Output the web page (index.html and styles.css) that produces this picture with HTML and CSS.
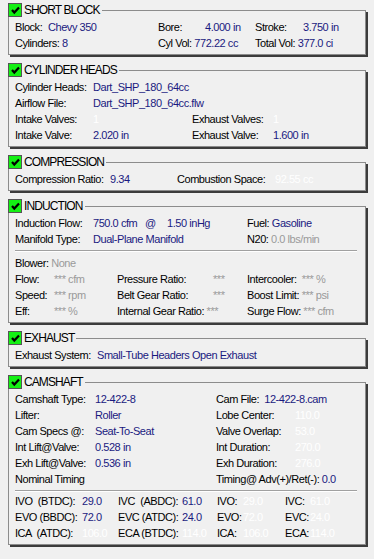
FILE: index.html
```html
<!DOCTYPE html>
<html>
<head>
  <meta charset="UTF-8">
  <title>Engine Summary</title>
  <link rel="stylesheet" href="styles.css">
</head>
<body>

<!-- SHORT BLOCK -->
<div class="panel">
  <div class="head"><span class="chk"><svg width="11" height="11" viewBox="0 0 11 11"><path d="M2 5 L4.3 7.6 L9 2.5" fill="none" stroke="#000" stroke-width="2.2"/></svg></span>SHORT BLOCK</div>
  <div class="grid g-sb">
    <span>Block:</span><span class="v">Chevy 350</span><span>Bore:</span><span class="v">4.000 in</span><span>Stroke:</span><span class="v">3.750 in</span>
    <span class="s2">Cylinders: <b class="v">8</b></span><span class="s2">Cyl Vol: <b class="v">772.22 cc</b></span><span class="s2">Total Vol: <b class="v">377.0 ci</b></span>
  </div>
</div>

<!-- CYLINDER HEADS -->
<div class="panel">
  <div class="head"><span class="chk"><svg width="11" height="11" viewBox="0 0 11 11"><path d="M2 5 L4.3 7.6 L9 2.5" fill="none" stroke="#000" stroke-width="2.2"/></svg></span>CYLINDER HEADS</div>
  <div class="grid g-ch">
    <span>Cylinder Heads:</span><span class="v s3">Dart_SHP_180_64cc</span>
    <span>Airflow File:</span><span class="v s3">Dart_SHP_180_64cc.flw</span>
    <span>Intake Valves:</span><span class="w">1</span><span>Exhaust Valves:</span><span class="w">1</span>
    <span>Intake Valve:</span><span class="v">2.020 in</span><span>Exhaust Valve:</span><span class="v">1.600 in</span>
  </div>
</div>

<!-- COMPRESSION -->
<div class="panel">
  <div class="head"><span class="chk"><svg width="11" height="11" viewBox="0 0 11 11"><path d="M2 5 L4.3 7.6 L9 2.5" fill="none" stroke="#000" stroke-width="2.2"/></svg></span>COMPRESSION</div>
  <div class="grid g-co">
    <span>Compression Ratio:</span><span class="v">9.34</span><span>Combustion Space:</span><span class="w">92.55 cc</span>
  </div>
</div>

<!-- INDUCTION -->
<div class="panel">
  <div class="head"><span class="chk"><svg width="11" height="11" viewBox="0 0 11 11"><path d="M2 5 L4.3 7.6 L9 2.5" fill="none" stroke="#000" stroke-width="2.2"/></svg></span>INDUCTION</div>
  <div class="grid g-in">
    <span>Induction Flow:</span><span class="v">750.0 cfm</span><span class="v">@</span><span class="v">1.50 inHg</span><span>Fuel: <b class="v">Gasoline</b></span>
    <span>Manifold Type:</span><span class="v s3">Dual-Plane Manifold</span><span>N20: <b class="g">0.0 lbs/min</b></span>
  </div>
  <div class="sep"></div>
  <div class="grid g-bl">
    <span class="s5">Blower: <b class="g">None</b></span>
    <span>Flow:</span><span class="g">*** cfm</span><span>Pressure Ratio:</span><span class="g">***</span><span>Intercooler: <b class="g">&nbsp;*** %</b></span>
    <span>Speed:</span><span class="g">*** rpm</span><span>Belt Gear Ratio:</span><span class="g">***</span><span>Boost Limit: <b class="g">*** psi</b></span>
    <span>Eff:</span><span class="g">*** %</span><span>Internal Gear Ratio: <b class="g">***</b></span><span></span><span>Surge Flow: <b class="g">*** cfm</b></span>
  </div>
</div>

<!-- EXHAUST -->
<div class="panel">
  <div class="head"><span class="chk"><svg width="11" height="11" viewBox="0 0 11 11"><path d="M2 5 L4.3 7.6 L9 2.5" fill="none" stroke="#000" stroke-width="2.2"/></svg></span>EXHAUST</div>
  <div class="grid g-ex">
    <span>Exhaust System:</span><span class="v">Small-Tube Headers Open Exhaust</span>
  </div>
</div>

<!-- CAMSHAFT -->
<div class="panel">
  <div class="head"><span class="chk"><svg width="11" height="11" viewBox="0 0 11 11"><path d="M2 5 L4.3 7.6 L9 2.5" fill="none" stroke="#000" stroke-width="2.2"/></svg></span>CAMSHAFT</div>
  <div class="grid g-cam">
    <span>Camshaft Type:</span><span class="v">12-422-8</span><span class="s2">Cam File: &nbsp;<b class="v">12-422-8.cam</b></span>
    <span>Lifter:</span><span class="v">Roller</span><span>Lobe Center:</span><span class="w">110.0</span>
    <span>Cam Specs @:</span><span class="v">Seat-To-Seat</span><span>Valve Overlap:</span><span class="w">53.0</span>
    <span>Int Lift@Valve:</span><span class="v">0.528 in</span><span>Int Duration:</span><span class="w">270.0</span>
    <span>Exh Lift@Valve:</span><span class="v">0.536 in</span><span>Exh Duration:</span><span class="w">276.0</span>
    <span class="s2">Nominal Timing</span><span class="s2">Timing@ Adv(+)/Ret(-): <b class="v">0.0</b></span>
  </div>
  <div class="sep sep-tight"></div>
  <div class="grid g-tm">
    <span>IVO &nbsp;(BTDC):</span><span class="v">29.0</span><span>IVC &nbsp;(ABDC):</span><span class="v">61.0</span><span>IVO:</span><span class="w">29.0</span><span>IVC:</span><span class="w">61.0</span>
    <span>EVO (BBDC):</span><span class="v">72.0</span><span>EVC (ATDC):</span><span class="v">24.0</span><span>EVO:</span><span class="w">72.0</span><span>EVC:</span><span class="w">24.0</span>
    <span>ICA &nbsp;(ATDC):</span><span class="w">106.0</span><span>ECA (BTDC):</span><span class="w">114.0</span><span>ICA:</span><span class="w">106.0</span><span>ECA:</span><span class="w">114.0</span>
  </div>
</div>

</body>
</html>
```

FILE: styles.css
```css
/* --- base --- */
* {
  margin: 0;
  padding: 0;
  box-sizing: border-box;
}
html, body {
  background: #f0f0f0;
}
body {
  padding-top: 10px;
  font-family: 'Liberation Sans', Arial, sans-serif;
  font-size: 11px;
  letter-spacing: -0.45px;
  color: #000;
}
b {
  font-weight: normal;
}

/* --- group panels --- */
.panel {
  margin: 0 8px 15px;
  padding: 0 6px 3px;
  border: 1px solid #8c8c8c;
  box-shadow: 2px 2px 0 #3c3c3c;
}
.head {
  display: flex;
  align-items: center;
  width: fit-content;
  height: 14px;
  margin: -8px 0 2px -7px;
  padding-right: 2px;
  background: #f0f0f0;
  font-size: 12px;
  letter-spacing: -0.9px;
  line-height: 14px;
}
.chk {
  display: flex;
  align-items: center;
  justify-content: center;
  width: 14px;
  height: 14px;
  margin-right: 2px;
  border: 1px solid #555;
  background: #14f014;
}

/* --- rows --- */
.grid {
  display: grid;
  grid-auto-rows: 16px;
  align-items: center;
  white-space: nowrap;
}
.s2 { grid-column: span 2; }
.s3 { grid-column: span 3; }
.s5 { grid-column: span 5; }

.v { color: #1a1a80; }
.g { color: #9a9a9a; }
.w { color: #fff; }

.sep {
  height: 2px;
  margin: 3px 2px 3px 0;
  border-top: 1px solid #a0a0a0;
  border-bottom: 1px solid #fff;
}
.sep-tight {
  margin-bottom: 1px;
}

.g-sb  { grid-template-columns: 33px 110px 47px 50px 48px auto; }
.g-ch  { grid-template-columns: 78px 99px 81px auto; }
.g-co  { grid-template-columns: 95px 67px 98px auto; }
.g-in  { grid-template-columns: 78px 52px 22px 80px auto; }
.g-bl  { grid-template-columns: 39px 63px 96px 34px auto; }
.g-ex  { grid-template-columns: 82px auto; }
.g-cam { grid-template-columns: 80px 121px 79px auto; }
.g-tm  { grid-template-columns: 67px 36px 64px 35px 26px 42px 25px auto; }
```
